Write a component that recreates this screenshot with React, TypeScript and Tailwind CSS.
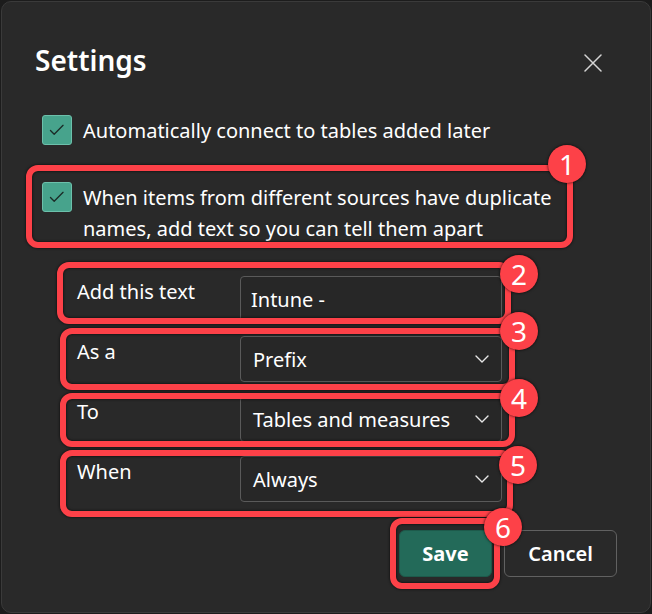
import React from "react";

function Check() {
  return (
    <div className="flex h-[30px] w-[30px] shrink-0 items-center justify-center rounded-[3px] border border-[#6cc0ab] bg-[#47a38c]">
      <svg width="30" height="30" viewBox="0 0 30 30" fill="none">
        <path d="M8 15.5 L12 19.5 L21.5 10" stroke="#1b2a26" strokeWidth="1.4" strokeLinecap="round" strokeLinejoin="round" />
      </svg>
    </div>
  );
}

function Chevron() {
  return (
    <svg width="14" height="8" viewBox="0 0 14 8" fill="none">
      <path d="M1 1 L7 7 L13 1" stroke="#e6e6e6" strokeWidth="1.4" strokeLinecap="round" strokeLinejoin="round" />
    </svg>
  );
}

function Field({ label, value, select }: { label: string; value: string; select?: boolean }) {
  return (
    <div className="flex items-start">
      <div className="w-[163px] shrink-0 text-[20px] leading-[31px]">{label}</div>
      <div
        className={
          "flex h-[46px] w-[262px] items-center justify-between rounded-[4px] border border-[#5a5a5a] bg-[#272727] pr-[12px] text-[20px] leading-[31px] " +
          (select ? "pl-[12px]" : "pl-[10px]")
        }
      >
        <span>{value}</span>
        {select && <Chevron />}
      </div>
    </div>
  );
}

type Mark = { n: number; box: string; badge: string };

const marks: Mark[] = [
  { n: 1, box: "left-[24px] top-[163px] w-[547px] h-[83px]", badge: "left-[546px] top-[143px]" },
  { n: 2, box: "left-[55px] top-[260px] w-[454px] h-[62px]", badge: "left-[498px] top-[253px]" },
  { n: 3, box: "left-[58px] top-[326px] w-[455px] h-[62px]", badge: "left-[498px] top-[310px]" },
  { n: 4, box: "left-[58px] top-[391px] w-[455px] h-[54px]", badge: "left-[498px] top-[377px]" },
  { n: 5, box: "left-[58px] top-[448px] w-[453px] h-[67px]", badge: "left-[497px] top-[444px]" },
  { n: 6, box: "left-[388px] top-[516px] w-[110px] h-[71px]", badge: "left-[482px] top-[506px]" },
];

export default function App() {
  return (
    <div className="h-[614px] w-[652px] bg-[#1c1c1c] p-px font-['Noto_Sans',sans-serif] text-white">
      <div className="relative h-full rounded-[10px] border border-[#3a3a3a] bg-[#292929]">
        {/* header */}
        <div className="flex items-start justify-between pl-[33px] pr-[48px] pt-[40px]">
          <h1 className="text-[28px] font-semibold leading-[37px]">Settings</h1>
          <svg className="mt-[12px]" width="18" height="18" viewBox="0 0 18 18" fill="none">
            <path d="M1 1 L17 17 M17 1 L1 17" stroke="#d4d4d4" strokeWidth="1.5" strokeLinecap="round" />
          </svg>
        </div>

        {/* options */}
        <div className="mt-[36px] flex flex-col gap-[36px] pl-[40px]">
          <label className="flex items-start gap-[11px]">
            <Check />
            <span className="text-[20px] leading-[31px]">Automatically connect to tables added later</span>
          </label>
          <label className="flex items-start gap-[11px]">
            <Check />
            <span className="text-[20px] leading-[31px]">
              When items from different sources have duplicate
              <br />
              names, add text so you can tell them apart
            </span>
          </label>
        </div>

        {/* text options */}
        <div className="mt-[32px] flex flex-col gap-[14px] pl-[75px]">
          <Field label="Add this text" value="Intune -" />
          <Field label="As a" value="Prefix" select />
          <Field label="To" value="Tables and measures" select />
          <Field label="When" value="Always" select />
        </div>

        {/* actions */}
        <div className="mt-[28px] flex justify-end gap-[12px] pr-[33px]">
          <button className="h-[47px] w-[93px] rounded-[6px] border border-[#1d5a4b] bg-[#236a59] text-[20px] font-bold">
            Save
          </button>
          <button className="h-[47px] w-[113px] rounded-[6px] border border-[#616161] bg-[#292929] text-[20px] font-semibold">
            Cancel
          </button>
        </div>

        {/* callouts */}
        <div className="pointer-events-none absolute inset-0">
          {marks.map((m) => (
            <div
              key={"b" + m.n}
              className={
                "absolute rounded-[12px] border-[6px] border-[#fd4148] shadow-[0_0_3px_rgba(0,0,0,0.85),inset_0_0_3px_rgba(0,0,0,0.85)] " +
                m.box
              }
            />
          ))}
          {marks.map((m) => (
            <div
              key={"n" + m.n}
              className={
                "absolute flex h-[38px] w-[38px] items-center justify-center rounded-full bg-[#fd4148] text-[28px] leading-none text-white shadow-[0_0_3px_rgba(0,0,0,0.85)] " +
                m.badge
              }
            >
              {m.n}
            </div>
          ))}
        </div>
      </div>
    </div>
  );
}
